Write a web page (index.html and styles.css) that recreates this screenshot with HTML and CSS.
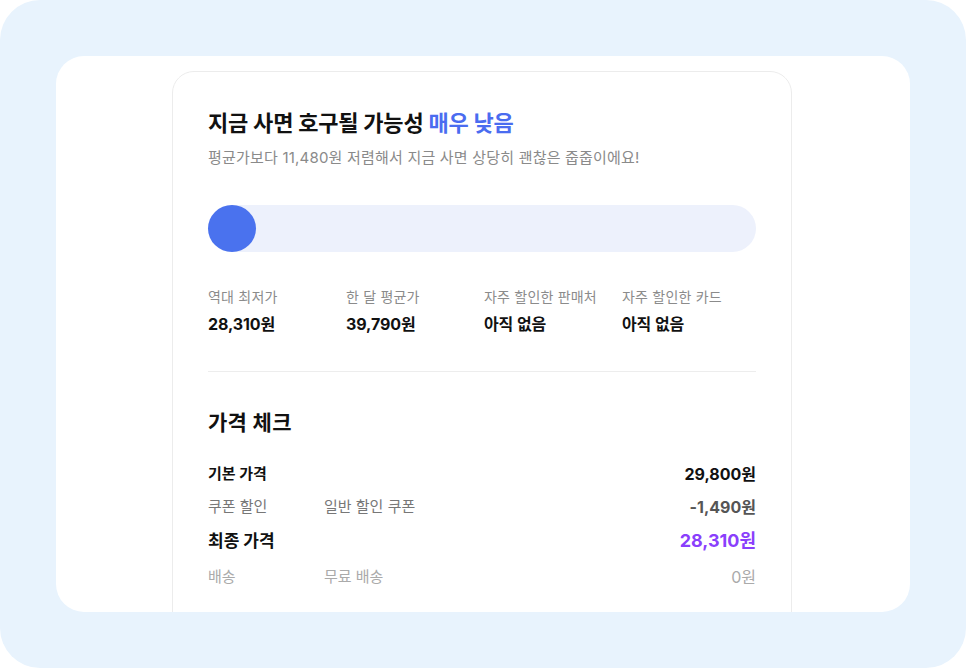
FILE: index.html
```html
<!DOCTYPE html>
<html lang="ko">
<head>
<meta charset="utf-8">
<title>가격 체크</title>
<link rel="stylesheet" href="styles.css">
</head>
<body>
<div class="frame">
  <div class="panel">
    <div class="card">
      <h1 class="title">지금 사면 호구될 가능성 <span class="accent">매우 낮음</span></h1>
      <p class="subtitle">평균가보다 11,480원 저렴해서 지금 사면 상당히 괜찮은 줍줍이에요!</p>
      <div class="bar"><div class="knob"></div></div>
      <div class="stats">
        <div class="stat"><div class="stat-label">역대 최저가</div><div class="stat-value">28,310원</div></div>
        <div class="stat"><div class="stat-label">한 달 평균가</div><div class="stat-value">39,790원</div></div>
        <div class="stat"><div class="stat-label">자주 할인한 판매처</div><div class="stat-value">아직 없음</div></div>
        <div class="stat"><div class="stat-label">자주 할인한 카드</div><div class="stat-value">아직 없음</div></div>
      </div>
      <hr class="divider">
      <h2 class="section-title">가격 체크</h2>
      <div class="rows">
        <div class="row row-base"><span class="r-label">기본 가격</span><span class="r-desc"></span><span class="r-val">29,800원</span></div>
        <div class="row row-coupon"><span class="r-label">쿠폰 할인</span><span class="r-desc">일반 할인 쿠폰</span><span class="r-val">-1,490원</span></div>
        <div class="row row-final"><span class="r-label">최종 가격</span><span class="r-desc"></span><span class="r-val">28,310원</span></div>
        <div class="row row-ship"><span class="r-label">배송</span><span class="r-desc">무료 배송</span><span class="r-val">0원</span></div>
      </div>
    </div>
  </div>
</div>
</body>
</html>
```

FILE: styles.css
```css
* { box-sizing: border-box; }
html, body { margin: 0; padding: 0; background: #ffffff; }
body {
  font-family: Inter, "Noto Sans CJK KR", sans-serif;
  color: #111111;
}
.frame {
  width: 966px;
  height: 668px;
  background: #e8f3fd;
  border-radius: 40px;
  padding: 56px 56px 0 56px;
  overflow: hidden;
}
.panel {
  width: 854px;
  height: 556px;
  background: #ffffff;
  border-radius: 28px;
  overflow: hidden;
  padding-top: 15px;
}
.card {
  width: 620px;
  margin-left: 116px;
  border: 1px solid #ececec;
  border-radius: 22px;
  padding: 35px 35px 60px 35px;
  background: #ffffff;
}
.title {
  margin: 0;
  font-size: 22px;
  line-height: 32px;
  font-weight: 700;
  letter-spacing: -0.2px;
  color: #111111;
}
.accent { color: #4a6cf0; }
.subtitle {
  margin: 8px 0 0 0;
  font-size: 15px;
  line-height: 22px;
  color: #8a8a8a;
  letter-spacing: 0.2px;
}
.bar {
  margin-top: 36px;
  height: 47px;
  background: #edf1fc;
  border-radius: 24px;
  display: flex;
  align-items: center;
}
.knob {
  width: 48px;
  height: 47px;
  border-radius: 50%;
  background: #4a72ee;
}
.stats {
  margin-top: 35px;
  display: grid;
  grid-template-columns: repeat(4, 138px);
}
.stat-label {
  font-size: 14px;
  line-height: 20px;
  color: #8b8b8b;
  letter-spacing: 0.2px;
}
.stat-value {
  margin-top: 6px;
  font-size: 16px;
  line-height: 22px;
  font-weight: 700;
  color: #111111;
  letter-spacing: -0.1px;
}
.divider {
  margin: 36px 0 0 0;
  border: 0;
  border-top: 1px solid #ededed;
  height: 0;
}
.section-title {
  margin: 37px 0 0 0;
  font-size: 21px;
  line-height: 28px;
  font-weight: 700;
  letter-spacing: 0.3px;
  color: #111111;
}
.rows {
  margin-top: 26px;
  display: flex;
  flex-direction: column;
  gap: 11px;
}
.row {
  display: grid;
  grid-template-columns: 116px 1fr auto;
  align-items: center;
  font-size: 15px;
  line-height: 22px;
  letter-spacing: 0;
}
.r-val { text-align: right; font-size: 16px; }
.row-base { font-weight: 700; color: #111111; }
.row-coupon { color: #777777; }
.row-coupon .r-val { color: #555555; font-weight: 700; }
.row-final { font-size: 17px; line-height: 24px; font-weight: 700; color: #111111; }
.row-final .r-val { color: #8a3ffc; font-size: 18px; }
.row-ship { color: #aaaaaa; margin-top: 2px; }
```
